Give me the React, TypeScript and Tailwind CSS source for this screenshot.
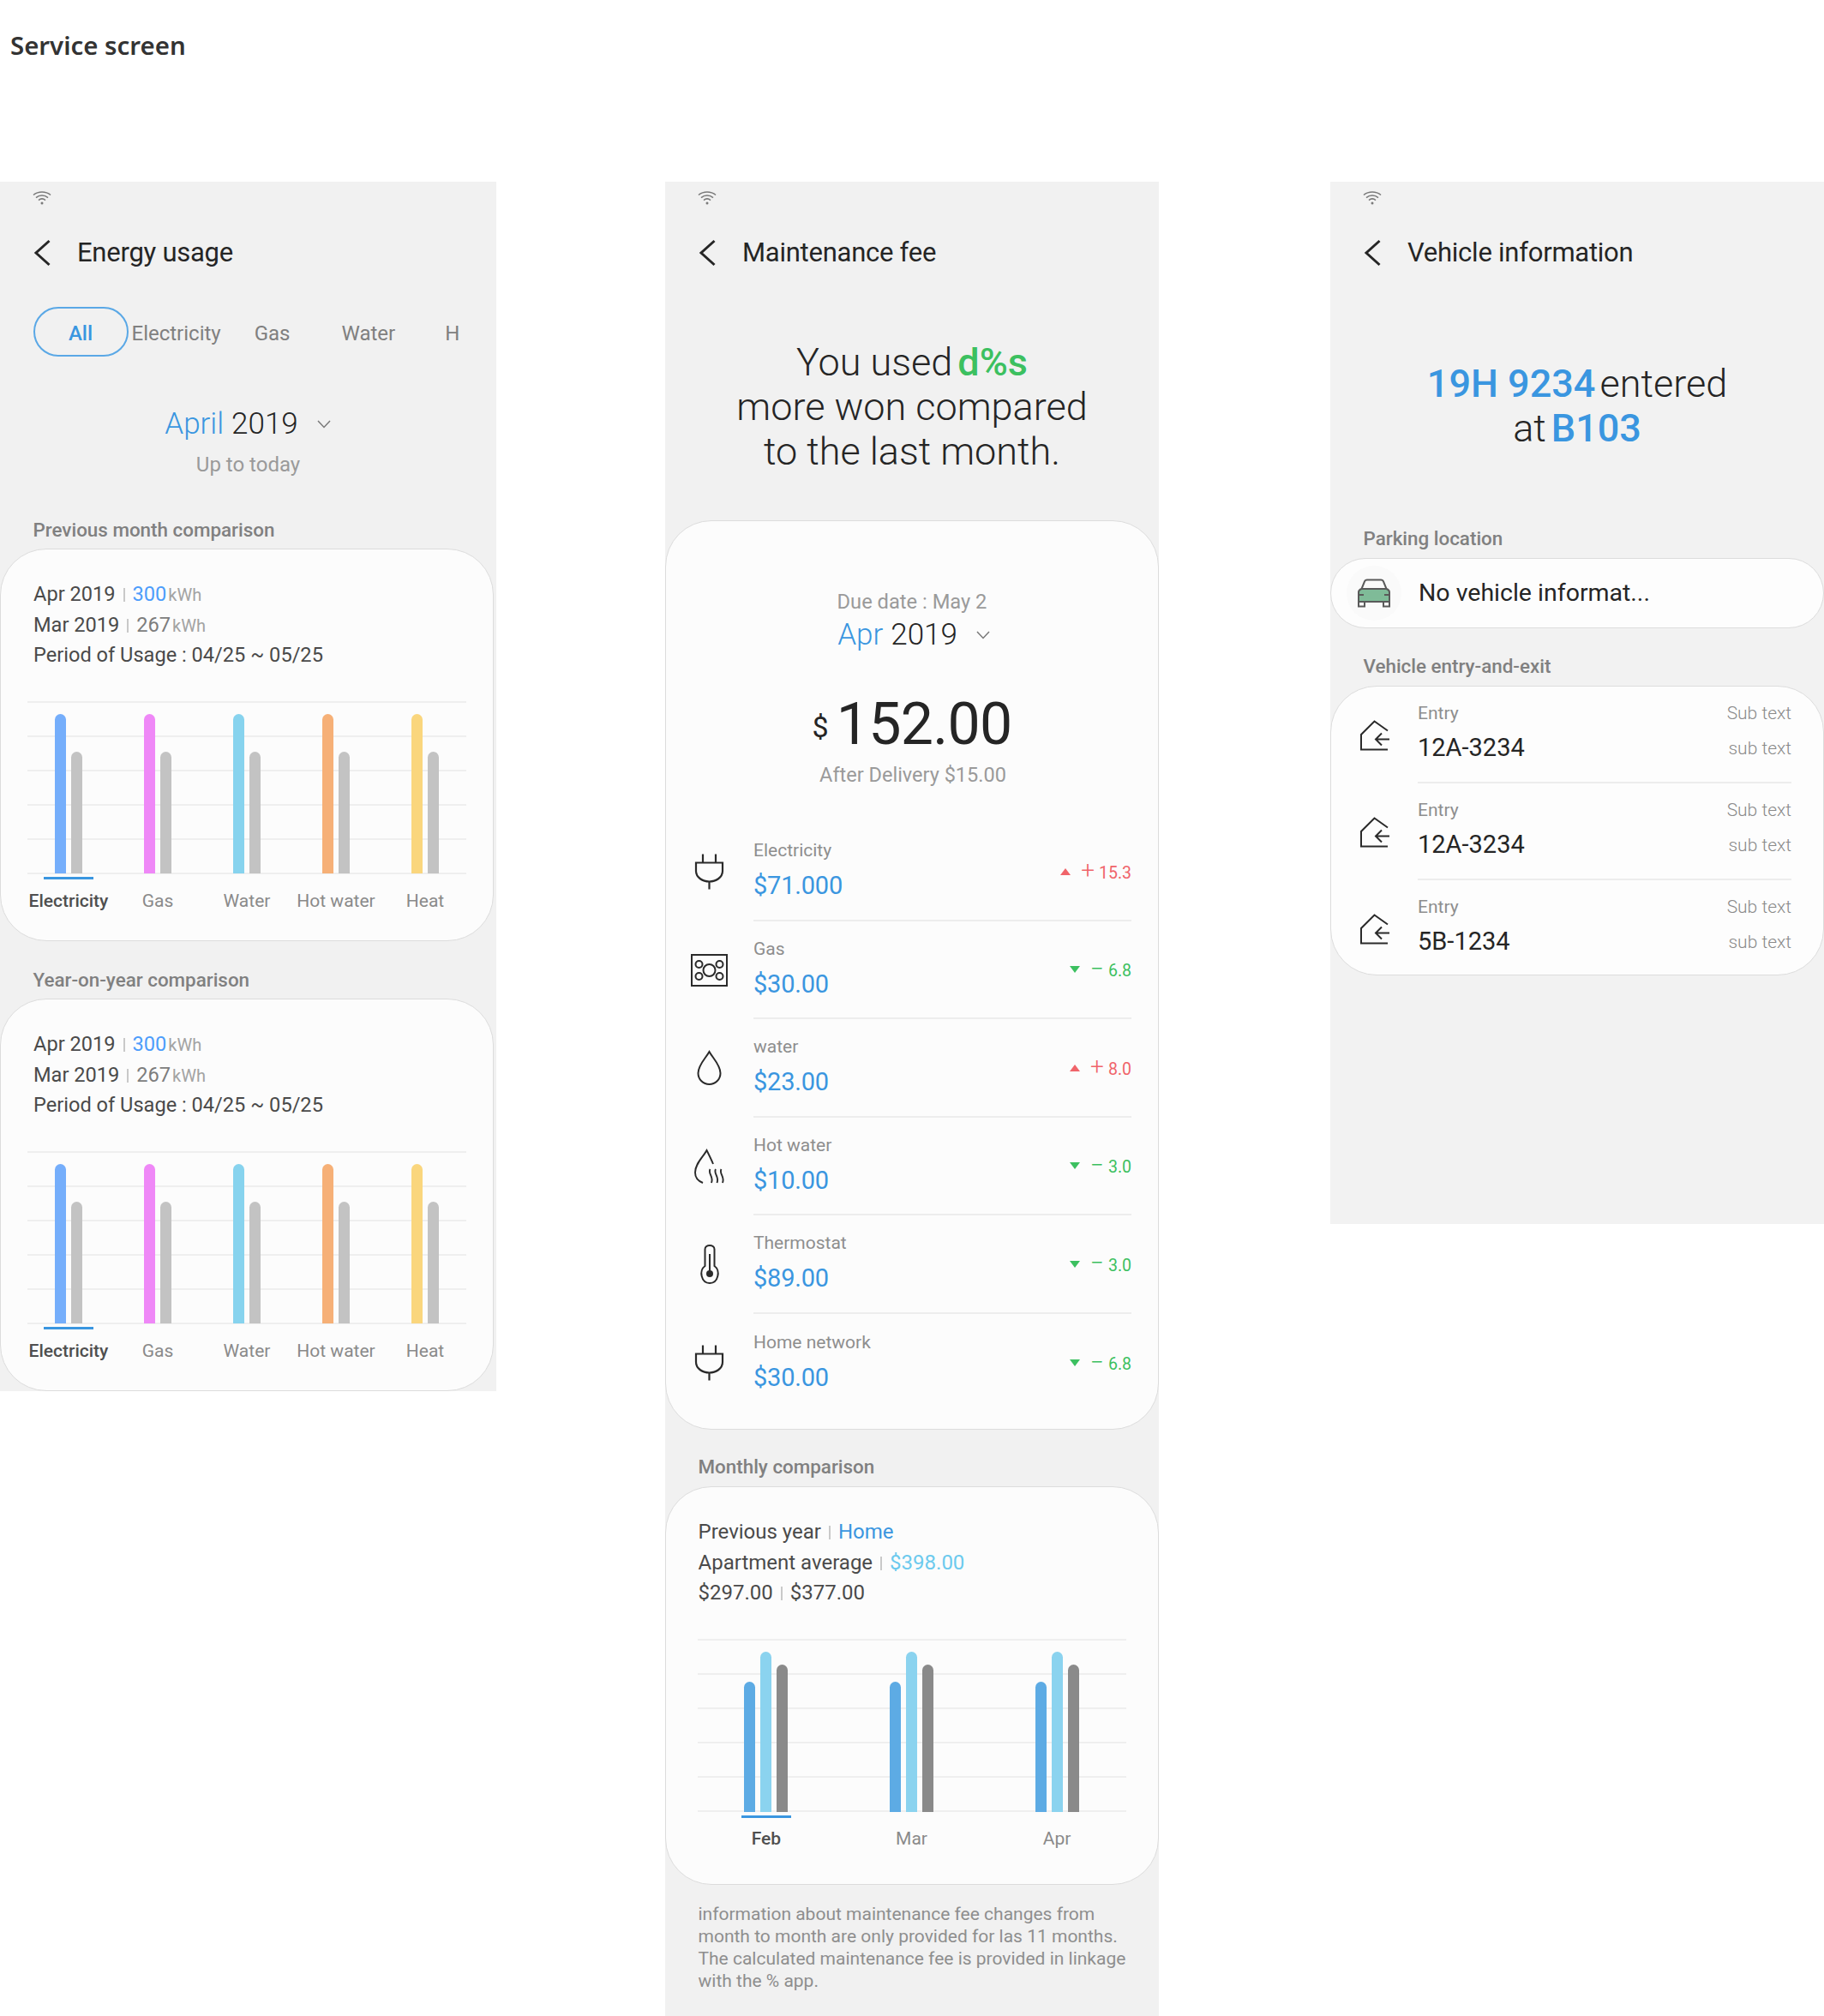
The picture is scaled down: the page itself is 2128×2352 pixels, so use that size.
const blue = "text-[#3a96e0]";

function Wifi() {
  return (
    <svg width="22" height="18" viewBox="0 0 22 18" fill="none" stroke="#7a7a7a" strokeWidth="1.6">
      <path d="M1 5.5C6.5 0.8 15.5 0.8 21 5.5" />
      <path d="M4 8.6C8 5.2 14 5.2 18 8.6" />
      <path d="M7 11.6C9.4 9.6 12.6 9.6 15 11.6" />
      <circle cx="11" cy="15" r="1.5" fill="#7a7a7a" stroke="none" />
    </svg>
  );
}

function Chevron() {
  return (
    <svg width="18" height="12" viewBox="0 0 18 12" fill="none" stroke="#7a7a7a" strokeWidth="1.5">
      <path d="M2 2L9 9.5L16 2" />
    </svg>
  );
}

function TopBar({ title }: { title: string }) {
  return (
    <>
      <div className="h-[36px] pl-[38px] pt-[10px]">
        <Wifi />
      </div>
      <div className="h-[94px] flex items-center pl-[39px]">
        <svg width="22" height="32" viewBox="0 0 22 32" fill="none" stroke="#262626" strokeWidth="3">
          <path d="M18.5 2L3 16L18.5 30" />
        </svg>
        <h1 className="ml-[29px] pt-[1px] text-[31px] tracking-[-0.25px] text-[#252525]">{title}</h1>
      </div>
    </>
  );
}

function SectionLabel({ children, className }: { children: string; className: string }) {
  return (
    <div className={`h-[30px] leading-[30px] pl-[38.5px] text-[22.4px] font-medium text-[#808080] ${className}`}>
      {children}
    </div>
  );
}

function Sep() {
  return <span className="mx-[9px] inline-block h-[16px] w-[2px] bg-[#c9c9c9] align-[-1px]" />;
}

function Grid({ left, width }: { left: string; width: string }) {
  return (
    <div className={`absolute inset-y-0 flex flex-col justify-between ${left} ${width}`}>
      {[0, 1, 2, 3, 4, 5].map((i) => (
        <div key={i} className="h-[2px] bg-[#efefef]" />
      ))}
    </div>
  );
}

const usageBars = [
  { label: "Electricity", color: "bg-[#75aefb]" },
  { label: "Gas", color: "bg-[#ef88f7]" },
  { label: "Water", color: "bg-[#87d3ee]" },
  { label: "Hot water", color: "bg-[#f6b077]" },
  { label: "Heat", color: "bg-[#fad67d]" },
];

function UsageCard() {
  return (
    <div className="box-border h-[458px] w-[576px] rounded-[54px] border border-[#dcdcdc] bg-[#fcfcfc] pt-[35px]">
      <div className="pl-[38px] text-[23.6px] leading-[35.5px] text-[#4a4a4a]">
        <div className="h-[35.5px]">
          Apr 2019<Sep />
          <span className="text-[#4d9dfb]">300</span>
          <span className="ml-[2px] text-[20px] text-[#a3a3a3]">kWh</span>
        </div>
        <div className="h-[35.5px]">
          Mar 2019<Sep />
          <span className="text-[#7d7d7d]">267</span>
          <span className="ml-[2px] text-[20px] text-[#a3a3a3]">kWh</span>
        </div>
        <div className="h-[35.5px]">Period of Usage : 04/25 ~ 05/25</div>
      </div>
      <div className="relative ml-[27px] mt-[35.5px] h-[202px] w-[520px]">
        <Grid left="left-[4px]" width="w-[512px]" />
        <div className="relative grid h-[201px] grid-cols-5 items-end">
          {usageBars.map((bar) => (
            <div key={bar.label} className="flex items-end justify-center gap-[6.5px]">
              <div className={`h-[186px] w-[13px] rounded-t-full ${bar.color}`} />
              <div className="h-[142px] w-[13px] rounded-t-full bg-[#c3c3c3]" />
            </div>
          ))}
        </div>
      </div>
      <div className="ml-[27px] mt-[3px] grid w-[520px] grid-cols-5">
        {usageBars.map((bar, i) => (
          <div key={bar.label} className="flex flex-col items-center">
            <div className={`h-[3px] w-[58px] ${i === 0 ? "bg-[#3a96e0]" : ""}`} />
            <div className={`mt-[9.5px] text-[21px] leading-[30px] ${i === 0 ? "font-medium text-[#4f4f4f]" : "text-[#8a8a8a]"}`}>
              {bar.label}
            </div>
          </div>
        ))}
      </div>
    </div>
  );
}

function EnergyUsage() {
  return (
    <div className="h-[1411px] w-[579px] bg-[#f1f1f1]">
      <TopBar title="Energy usage" />
      <div className="mt-[16px] flex h-[58px] items-center pl-[38.5px] text-[24px] text-[#808080]">
        <div className="box-border flex h-[58px] w-[111px] items-center justify-center rounded-full border-2 border-[#5aa8e6] pt-[3px] font-medium text-[#3a96e0]">
          All
        </div>
        <span className="ml-[4px] mt-[3px]">Electricity</span>
        <span className="ml-[39px] mt-[3px]">Gas</span>
        <span className="ml-[60px] mt-[3px]">Water</span>
        <span className="ml-[58px] mt-[3px]">H</span>
      </div>
      <div className="mt-[54px] flex h-[50px] items-center justify-center text-[35px] font-light text-[#252525]">
        <span className={blue}>April</span>
        <span className="ml-[9px]">2019</span>
        <span className="ml-[21px]">
          <Chevron />
        </span>
      </div>
      <div className="mt-[7px] h-[30px] text-center text-[24px] leading-[30px] text-[#9a9a9a]">Up to today</div>
      <SectionLabel className="mt-[46px]">Previous month comparison</SectionLabel>
      <div className="mt-[7px]">
        <UsageCard />
      </div>
      <SectionLabel className="mt-[30px]">Year-on-year comparison</SectionLabel>
      <div className="mt-[7px]">
        <UsageCard />
      </div>
    </div>
  );
}

function PlugIcon() {
  return (
    <svg width="44" height="44" viewBox="0 0 44 44" fill="none" stroke="#2a2a2a" strokeWidth="2.2">
      <path d="M15 1.5V11.5M30 1.5V11.5M7 11.5H38V21C38 29 30 33.5 22.5 33.5C15 33.5 7 29 7 21ZM22.5 33.5V42.5" />
    </svg>
  );
}

function GasIcon() {
  return (
    <svg width="44" height="44" viewBox="0 0 44 44" fill="none" stroke="#2a2a2a" strokeWidth="2">
      <rect x="2" y="4" width="41" height="36" />
      <circle cx="10.5" cy="15" r="4" />
      <circle cx="34.5" cy="15" r="4" />
      <circle cx="10.5" cy="29" r="4" />
      <circle cx="34.5" cy="29" r="4" />
      <circle cx="22.5" cy="22" r="7" />
    </svg>
  );
}

function DropIcon() {
  return (
    <svg width="44" height="44" viewBox="0 0 44 44" fill="none" stroke="#2a2a2a" strokeWidth="2">
      <path d="M22.5 3C18 11 9.5 18.5 9.5 28C9.5 35.5 15.5 41 22.5 41C29.5 41 35.5 35.5 35.5 28C35.5 18.5 27 11 22.5 3Z" />
    </svg>
  );
}

function HotWaterIcon() {
  return (
    <svg width="44" height="44" viewBox="0 0 44 44" fill="none" stroke="#2a2a2a" strokeWidth="1.9">
      <path d="M27 19C25 14 22 8 19.5 3C16 10 6 18 6 29C6 35 10 39 15 41" />
      <path d="M23.5 25C20.5 30 28 34 25 41M30 25C27 30 34.5 34 31.5 41M36.5 25C33.5 30 41 34 38 41" />
    </svg>
  );
}

function ThermoIcon() {
  return (
    <svg width="44" height="48" viewBox="0 0 44 48" fill="none" stroke="#2a2a2a" strokeWidth="2">
      <path d="M17.5 26V6.5C17.5 0.5 28.5 0.5 28.5 6.5V26C36 31 33 46 23 46C13 46 10 31 17.5 26Z" />
      <circle cx="23" cy="35" r="4" fill="#2a2a2a" stroke="none" />
      <path d="M23 12V33" />
    </svg>
  );
}

function Delta({ up, value }: { up: boolean; value: string }) {
  return (
    <div className={`mt-[6px] flex items-center ${up ? "text-[#f0646a]" : "text-[#3cc060]"}`}>
      <svg width="12" height="10" viewBox="0 0 12 10" className="mb-[3px] fill-current">
        <path d={up ? "M6 1L12 9H0Z" : "M0 1H12L6 9Z"} />
      </svg>
      <span className="ml-[12px] text-[28px] font-light leading-[28px] -translate-y-[2px]">{up ? "+" : "−"}</span>
      <span className="ml-[5px] text-[19.5px]">{value}</span>
    </div>
  );
}

const feeRows = [
  { label: "Electricity", value: "$71.000", up: true, delta: "15.3", icon: <PlugIcon /> },
  { label: "Gas", value: "$30.00", up: false, delta: "6.8", icon: <GasIcon /> },
  { label: "water", value: "$23.00", up: true, delta: "8.0", icon: <DropIcon /> },
  { label: "Hot water", value: "$10.00", up: false, delta: "3.0", icon: <HotWaterIcon /> },
  { label: "Thermostat", value: "$89.00", up: false, delta: "3.0", icon: <ThermoIcon /> },
  { label: "Home network", value: "$30.00", up: false, delta: "6.8", icon: <PlugIcon /> },
];

function FeeCard() {
  return (
    <div className="box-border h-[1061px] rounded-[54px] border border-[#dcdcdc] bg-[#fcfcfc] pt-[79px]">
      <div className="h-[30px] text-center text-[23.7px] leading-[30px] text-[#9a9a9a]">Due date : May 2</div>
      <div className="mt-[4px] flex h-[40px] items-center justify-center pl-[5px] text-[35px] font-light text-[#252525]">
        <span className={blue}>Apr</span>
        <span className="ml-[9px]">2019</span>
        <span className="ml-[21px]">
          <Chevron />
        </span>
      </div>
      <div className="mt-[44px] flex h-[80px] items-center justify-center text-[#252525]">
        <span className="mt-[6px] text-[34px]">$</span>
        <span className="ml-[9px] text-[68px] tracking-[-0.7px]">152.00</span>
      </div>
      <div className="mt-[4px] h-[30px] pl-[2px] text-center text-[23.5px] leading-[30px] text-[#9a9a9a]">
        After Delivery $15.00
      </div>
      <div className="mt-[41px]">
        {feeRows.map((row, i) => (
          <div key={i} className="flex h-[114.5px]">
            <div className="flex w-[102px] items-center pl-[28px]">{row.icon}</div>
            <div className={`mr-[31px] flex flex-1 items-center justify-between pb-[2px] ${i < 5 ? "border-b-2 border-[#ededed]" : ""}`}>
              <div>
                <div className="h-[30px] text-[21px] leading-[30px] text-[#8e8e8e]">{row.label}</div>
                <div className={`mt-[6px] h-[40px] text-[29px] tracking-[-0.2px] leading-[40px] ${blue}`}>{row.value}</div>
              </div>
              <Delta up={row.up} value={row.delta} />
            </div>
          </div>
        ))}
      </div>
    </div>
  );
}

function MonthlyCard() {
  const months = ["Feb", "Mar", "Apr"];
  return (
    <div className="box-border h-[465px] rounded-[54px] border border-[#dcdcdc] bg-[#fcfcfc] pt-[35px]">
      <div className="pl-[37.5px] text-[24px] leading-[35.5px] text-[#4a4a4a]">
        <div className="h-[35.5px]">
          Previous year<Sep />
          <span className={blue}>Home</span>
        </div>
        <div className="h-[35.5px]">
          Apartment average<Sep />
          <span className="text-[#6ccaee]">$398.00</span>
        </div>
        <div className="h-[35.5px]">
          $297.00<Sep />
          $377.00
        </div>
      </div>
      <div className="relative ml-[32px] mt-[35px] h-[203px] w-[509px]">
        <Grid left="left-[5px]" width="w-[500px]" />
        <div className="relative grid h-[202px] grid-cols-3 items-end">
          {months.map((m) => (
            <div key={m} className="flex items-end justify-center gap-[6px]">
              <div className="h-[152px] w-[13px] rounded-t-full bg-[#5dabe4]" />
              <div className="h-[187px] w-[13px] rounded-t-full bg-[#8bd3ef]" />
              <div className="h-[172px] w-[13px] rounded-t-full bg-[#8a8a8a]" />
            </div>
          ))}
        </div>
      </div>
      <div className="ml-[32px] mt-[3px] grid w-[509px] grid-cols-3">
        {months.map((m, i) => (
          <div key={m} className="flex flex-col items-center">
            <div className={`h-[3px] w-[58px] ${i === 0 ? "bg-[#3a96e0]" : ""}`} />
            <div className={`mt-[9px] text-[21px] leading-[30px] ${i === 0 ? "font-medium text-[#4f4f4f]" : "text-[#8a8a8a]"}`}>
              {m}
            </div>
          </div>
        ))}
      </div>
    </div>
  );
}

function MaintenanceFee() {
  return (
    <div className="h-[2140px] w-[576px] bg-[#f1f1f1]">
      <TopBar title="Maintenance fee" />
      <div className="mt-[55px] text-center text-[45px] font-light leading-[52px] text-[#252525]">
        <div className="flex justify-center">
          <span>You used</span>
          <span className="ml-[6px] font-medium text-[#3cc060]">d%s</span>
        </div>
        <div>more won compared</div>
        <div>to the last month.</div>
      </div>
      <div className="mt-[54px]">
        <FeeCard />
      </div>
      <SectionLabel className="mt-[28px]">Monthly comparison</SectionLabel>
      <div className="mt-[8px]">
        <MonthlyCard />
      </div>
      <p className="mt-[21px] whitespace-nowrap pl-[38.5px] text-[21px] leading-[26px] text-[#8e8e8e]">
        information about maintenance fee changes from
        <br />
        month to month are only provided for las 11 months.
        <br />
        The calculated maintenance fee is provided in linkage
        <br />
        with the % app.
      </p>
    </div>
  );
}

function CarIcon() {
  return (
    <div className="flex h-[64px] w-[64px] items-center justify-center rounded-full bg-[#fafafa]">
      <svg width="40" height="34" viewBox="0 0 40 34" stroke="#5a5a5a" strokeWidth="2" fill="none">
        <path d="M2 16C2 13.5 4 12.5 5.5 12H34.5C36 12.5 38 13.5 38 16V27H2Z" fill="#7fbb98" />
        <path d="M5.5 12L9 3.5C9.5 2 10.5 1.5 12 1.5H28C29.5 1.5 30.5 2 31 3.5L34.5 12" />
        <path d="M2 27V32.5H9V27M31 27V32.5H38V27" />
        <path d="M2 19H8M32 19H38" />
      </svg>
    </div>
  );
}

function EntryIcon() {
  return (
    <svg width="36" height="36" viewBox="0 0 36 36" fill="none" stroke="#2a2a2a" strokeWidth="2">
      <path d="M33 12.5L17.5 1.5L2 17V34.5H33" />
      <path d="M35 22.5H19M26 15.5L19 22.5L26 29.5" />
    </svg>
  );
}

const entries = ["12A-3234", "12A-3234", "5B-1234"];

function VehicleInfo() {
  return (
    <div className="h-[1216px] w-[576px] bg-[#f2f2f2]">
      <TopBar title="Vehicle information" />
      <div className="mt-[80px] text-center text-[45px] font-light leading-[52px] text-[#252525]">
        <div className="flex justify-center">
          <span className={`font-medium ${blue}`}>19H 9234</span>
          <span className="ml-[5px]">entered</span>
        </div>
        <div className="flex justify-center">
          <span>at</span>
          <span className={`ml-[6px] font-medium ${blue}`}>B103</span>
        </div>
      </div>
      <SectionLabel className="mt-[87px]">Parking location</SectionLabel>
      <div className="mt-[8px] flex h-[82px] items-center rounded-full border border-[#dcdcdc] bg-[#fdfdfd] pl-[18px]">
        <CarIcon />
        <span className="ml-[20px] text-[28.5px] text-[#252525]">No vehicle informat...</span>
      </div>
      <SectionLabel className="mt-[29px]">Vehicle entry-and-exit</SectionLabel>
      <div className="mt-[8px] box-border h-[338px] rounded-[54px] border border-[#dcdcdc] bg-[#fdfdfd]">
        {entries.map((plate, i) => (
          <div key={i} className="flex h-[113px]">
            <div className="flex w-[101px] items-center pl-[33px]">
              <EntryIcon />
            </div>
            <div className={`mr-[37px] flex flex-1 justify-between pt-[16px] ${i < 2 ? "border-b-2 border-[#ededed]" : ""}`}>
              <div>
                <div className="h-[30px] text-[21px] leading-[30px] text-[#8e8e8e]">Entry</div>
                <div className="mt-[5px] h-[40px] text-[29px] leading-[40px] text-[#252525]">{plate}</div>
              </div>
              <div className="text-right text-[21px] font-light text-[#8a8a8a]">
                <div className="h-[30px] leading-[30px]">Sub text</div>
                <div className="mt-[11px] h-[30px] leading-[30px]">sub text</div>
              </div>
            </div>
          </div>
        ))}
      </div>
    </div>
  );
}

export default function App() {
  return (
    <div className="h-[2352px] w-[2128px] overflow-hidden bg-white [font-family:Roboto,sans-serif]">
      <div className="h-[212px] pl-[12px] pt-[31px] text-[29.4px] font-semibold leading-[44px] text-[#333333] [font-family:'Noto_Sans',sans-serif]">
        Service screen
      </div>
      <div className="flex items-start">
        <EnergyUsage />
        <div className="ml-[197px]">
          <MaintenanceFee />
        </div>
        <div className="ml-[200px]">
          <VehicleInfo />
        </div>
      </div>
    </div>
  );
}
